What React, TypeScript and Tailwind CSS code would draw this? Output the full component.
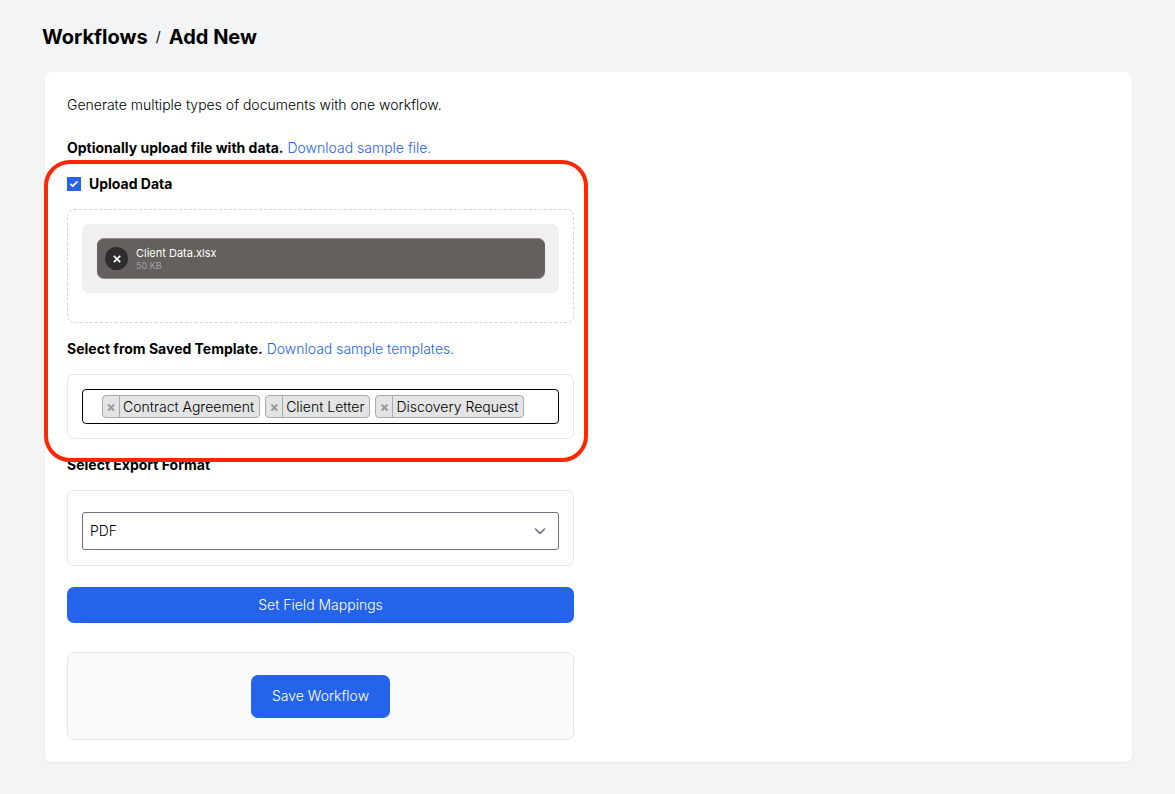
import { useState } from "react";

const initialTemplates = ["Contract Agreement", "Client Letter", "Discovery Request"];

function SectionTitle({ id, title, link }: { id?: string; title: string; link?: string }) {
  return (
    <h2 id={id} className="leading-[22px]">
      <span className="font-bold">{title}</span>
      {link && (
        <>
          {" "}
          <a href="#" className="text-[#2563eb]">
            {link}
          </a>
        </>
      )}
    </h2>
  );
}

function UploadedFile({ name, size }: { name: string; size: string }) {
  return (
    <div className="flex h-[41px] items-center gap-2 rounded-[7px] border-y border-[#8d8a88] bg-[#64605e] px-2">
      <button
        type="button"
        aria-label={`Remove ${name}`}
        className="flex size-[23px] items-center justify-center rounded-full bg-[#2f2d2c] text-white"
      >
        <svg viewBox="0 0 8 8" className="size-2" fill="none" stroke="currentColor" strokeWidth="1.8">
          <path d="M0.800 0.800l6.400 6.400M7.200 0.800L0.800 7.200" />
        </svg>
      </button>
      <div>
        <p className="text-[11px] leading-[14px] font-normal text-white">{name}</p>
        <p className="text-[9px] leading-[11px] font-normal text-[#a3a09e]">{size}</p>
      </div>
    </div>
  );
}

export default function App() {
  const [uploading, setUploading] = useState(true);
  const [templates, setTemplates] = useState(initialTemplates);

  return (
    <div className="min-h-screen bg-gray-100 pt-[23px] pr-[43px] pb-8 pl-[45px] font-['Inter',sans-serif] text-[14px] font-light text-black">
      <h1 className="-ml-[3px] flex items-center gap-2 text-[20px] leading-7 font-bold">
        <span>Workflows</span>
        <span className="text-[14px] font-normal">/</span>
        <span>Add New</span>
      </h1>

      <main className="mt-[21px] grid grid-cols-2 gap-[29px] rounded-[7px] bg-white p-[22px] shadow-xs">
        <form onSubmit={(e) => e.preventDefault()}>
          <p className="leading-[22px] whitespace-nowrap">Generate multiple types of documents with one workflow.</p>

          <div className="mt-[21px]">
            <SectionTitle title="Optionally upload file with data." link="Download sample file." />
          </div>

          <div className="relative mt-[14px]">
            <div className="flex h-[22px] items-center gap-2">
              <span className="relative flex size-[14px]">
                <input
                  id="upload-data"
                  type="checkbox"
                  checked={uploading}
                  onChange={(e) => setUploading(e.target.checked)}
                  className="peer size-[14px] appearance-none border border-gray-500 bg-white checked:border-[#2563eb] checked:bg-[#2563eb]"
                />
                <svg viewBox="0 0 16 16" className="pointer-events-none absolute inset-0 hidden size-[14px] fill-white peer-checked:block">
                  <path d="M12.207 4.793a1 1 0 010 1.414l-5 5a1 1 0 01-1.414 0l-2-2a1 1 0 011.414-1.414L6.500 9.086l4.293-4.293a1 1 0 011.414 0z" />
                </svg>
              </span>
              <label htmlFor="upload-data" className="leading-[22px] font-bold">
                Upload Data
              </label>
            </div>

            <div className="mt-[14px] rounded-[7px] border border-dashed border-gray-300 px-[14px] pt-[14px] pb-[29px]">
              <div className="rounded-[7px] bg-[#f1f0ef] py-[14px] pr-[14px] pl-[15px]">
                <UploadedFile name="Client Data.xlsx" size="50 KB" />
              </div>
            </div>

            <div className="mt-[15px]">
              <SectionTitle title="Select from Saved Template." link="Download sample templates." />
            </div>

            <div className="mt-[14px] rounded-[7px] border border-gray-200 p-[14px]">
              <ul className="flex h-[35px] items-center gap-[5px] rounded-[4px] border border-black pr-[5px] pl-[19px]">
                {templates.map((name) => (
                  <li key={name} className="flex h-[23px] items-stretch rounded-[4px] border border-[#aaa] bg-[#e4e4e4] whitespace-nowrap">
                    <button
                      type="button"
                      aria-label={`Remove ${name}`}
                      onClick={() => setTemplates(templates.filter((t) => t !== name))}
                      className="w-[17px] border-r border-[#aaa] leading-[21px] font-bold text-[#999]"
                    >
                      ×
                    </button>
                    <span className="pr-[5px] pl-[3px] leading-[21px]">{name}</span>
                  </li>
                ))}
              </ul>
            </div>

            <div className="pointer-events-none absolute -top-[13px] -right-[14px] -bottom-[23px] -left-[23px] z-10 rounded-[26px] border-4 border-[#ff2600]" />
          </div>

          <div className="mt-[15px]">
            <SectionTitle id="export-format" title="Select Export Format" />
          </div>
          <div className="mt-[14px] rounded-[7px] border border-gray-200 px-[14px] pt-[21px] pb-[15px]">
            <div className="relative">
              <select
                aria-labelledby="export-format"
                className="block h-[38px] w-full appearance-none rounded-[3px] border border-gray-500 bg-white px-[7px] leading-[22px]"
              >
                <option>PDF</option>
                <option>Word</option>
              </select>
              <svg
                viewBox="0 0 20 20"
                className="pointer-events-none absolute top-[9px] right-[9px] size-5 text-gray-500"
                fill="none"
                stroke="currentColor"
                strokeWidth="1.5"
                strokeLinecap="round"
                strokeLinejoin="round"
              >
                <path d="M5.500 8l4.500 4.500L14.500 8" />
              </svg>
            </div>
          </div>

          <button type="button" className="mt-[21px] h-9 w-full rounded-[7px] bg-[#2563eb] leading-[22px] text-white">
            Set Field Mappings
          </button>

          <div className="mt-[29px] flex justify-center rounded-[7px] border border-gray-200 bg-gray-50 pt-[22px] pb-[21px]">
            <button type="submit" className="rounded-[7px] bg-[#2563eb] px-[21px] pt-[10px] pb-[11px] leading-[22px] text-white">
              Save Workflow
            </button>
          </div>
        </form>
      </main>
    </div>
  );
}
